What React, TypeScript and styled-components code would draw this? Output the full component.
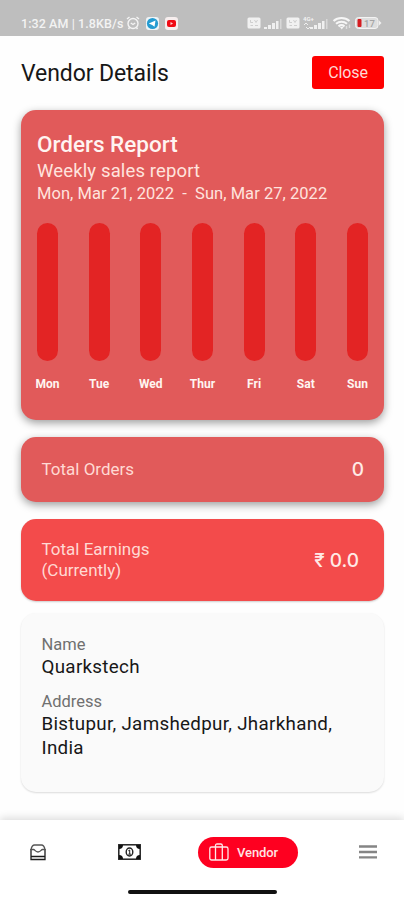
import styled, { createGlobalStyle } from "styled-components";

const days = ["Mon", "Tue", "Wed", "Thur", "Fri", "Sat", "Sun"];

const SimIcon = () => (
	<svg width="14" height="12" viewBox="0 0 14 12">
		<rect x="0.5" y="0.5" width="13" height="11" rx="1.500" fill="#f1f1f1" />
		<path d="M3.500 3v2.500H6M7.500 3l1.500 2.500L10.500 3M3.500 8.500H6M8 8.500h3" stroke="#cfcfcf" fill="none" />
	</svg>
);

const Signal = ({ lte }: { lte?: boolean }) => (
	<svg width={lte ? 25 : 18} height="14" viewBox={lte ? "-7 0 25 14" : "0 0 18 14"}>
		{lte && (
			<>
				<text x="-7" y="5" fontFamily="Roboto, sans-serif" fontSize="6" fontWeight="700" fill="#f2f2f2">
					4G+
				</text>
				<path d="M-6 9l2-2 2 2M-4 11l2 2 2-2" stroke="#efefef" fill="none" />
			</>
		)}
		<path d="M0 11h3v2H0zM4 9h3v4H4zM8 7h3v6H8zM12 5h2.500v8H12z" fill="#f0f0f0" />
		<path d="M16 3h1.500v10H16z" fill="#d8d8d8" />
	</svg>
);

const App = () => {
	return (
		<Screen>
			<Global />
			<StatusBar>
				<Clock>1:32 AM | 1.8KB/s</Clock>
				<StatusLeft>
					<svg width="14" height="14" viewBox="0 0 14 14" fill="none" stroke="#f4f4f4" strokeWidth="1.4">
						<circle cx="7" cy="7.500" r="5" />
						<path d="M1 3l2.500-2M13 3l-2.500-2M4.800 7L7 8.500 9.200 7M3.500 11.500l-1 1.500M10.500 11.500l1 1.500" />
					</svg>
					<svg width="13" height="13" viewBox="0 0 13 13">
						<rect width="13" height="13" rx="3" fill="#eef4f7" />
						<circle cx="6.500" cy="6.500" r="5.600" fill="#249bd1" />
						<path d="M2.800 6.500l6.700-3-1 6.300-2.300-1.800z" fill="#fff" />
					</svg>
					<svg width="13" height="13" viewBox="0 0 13 13">
						<rect width="13" height="13" rx="3" fill="#f7eeee" />
						<rect x="2" y="3" width="9" height="7" rx="2" fill="#f00a14" />
						<path d="M5.500 5l2.500 1.500L5.500 8z" fill="#ffd0d0" />
					</svg>
				</StatusLeft>
				<StatusRight>
					<SimIcon />
					<Signal />
					<SimIcon />
					<Signal lte />
					<svg width="20" height="14" viewBox="0 0 20 14" fill="none" stroke="#f6f6f6" strokeWidth="2.100">
						<path d="M1.500 5c4.500-4 11.500-4 16 0M4 7.800c3.200-2.700 7.800-2.700 11 0M6.500 10.300c1.800-1.400 4.200-1.400 6 0" />
						<path d="M8 11h3.500l-1.700 2.500z" fill="#f6f6f6" stroke="none" />
						<path d="M14.500 13v-3M17.500 8.500v3.500" stroke="#dedede" strokeWidth="1.400" />
					</svg>
					<svg width="27" height="12" viewBox="0 0 27 12">
						<rect x="0.500" y="0.500" width="22.500" height="11" rx="3" fill="#dedede" stroke="#f3f3f3" />
						<path d="M24 3.500l2.500 2.500L24 8.500z" fill="#f0f0f0" />
						<rect x="2.500" y="2" width="4" height="8" rx="1" fill="#d51c20" />
						<text x="9" y="9.500" fontFamily="Roboto, sans-serif" fontSize="9.500" fontWeight="500" fill="#a5a5a5">
							17
						</text>
					</svg>
				</StatusRight>
			</StatusBar>

			<Header>
				<Title>Vendor Details</Title>
				<CloseButton>Close</CloseButton>
			</Header>

			<Content>
				<ReportCard>
					<ReportTitle>Orders Report</ReportTitle>
					<ReportSub>Weekly sales report</ReportSub>
					<ReportDates>Mon, Mar 21, 2022&nbsp; -&nbsp; Sun, Mar 27, 2022</ReportDates>
					<Chart>
						{days.map((day) => (
							<Day key={day}>
								<Bar />
								<DayName>{day}</DayName>
							</Day>
						))}
					</Chart>
				</ReportCard>

				<OrdersCard>
					<StatLabel>Total Orders</StatLabel>
					<StatValue>0</StatValue>
				</OrdersCard>

				<EarningsCard>
					<StatLabel>
						Total Earnings
						<br />
						(Currently)
					</StatLabel>
					<StatValue>₹ 0.0</StatValue>
				</EarningsCard>

				<InfoCard>
					<InfoLabel>Name</InfoLabel>
					<InfoValue>Quarkstech</InfoValue>
					<InfoLabel>Address</InfoLabel>
					<InfoValue>
						Bistupur, Jamshedpur, Jharkhand,
						<br />
						India
					</InfoValue>
				</InfoCard>
			</Content>

			<BottomNav>
				<Tabs>
					<NavItem $gap={71}>
						<svg width="18" height="18" viewBox="0 0 18 18" fill="none" stroke="#1c1c1c" strokeWidth="1.300">
							<path d="M2 6.500Q3 2 5.500 2h7Q15 2 16 6.500" stroke="#555" />
							<path d="M2 6v10.500h14V6M2 13.500h14" />
							<path d="M2 6.500h2.500c1.500 0 1.500 2.500 4.500 2.500s3-2.500 4.500-2.500H16" stroke="#555" />
						</svg>
					</NavItem>
					<NavItem $gap={57}>
						<svg width="23" height="16" viewBox="0 0 23 16">
							<rect x="0.800" y="0.800" width="21.400" height="14.400" fill="#fff" stroke="#222" strokeWidth="1.500" />
							<path d="M1 1h4A4 4 0 0 1 1 5zM22 1h-4a4 4 0 0 0 4 4zM1 15h4A4 4 0 0 0 1 11zM22 15h-4a4 4 0 0 1 4-4z" fill="#111" />
							<ellipse cx="11.500" cy="8" rx="3.300" ry="4" fill="none" stroke="#222" strokeWidth="1.400" />
							<path d="M10.300 6.800l1.400-.8v4M10.300 10.200h2.700" stroke="#222" fill="none" />
						</svg>
					</NavItem>
					<VendorTab>
						<svg width="20" height="18" viewBox="0 0 20 18" fill="none" stroke="#ffe9ea" strokeWidth="1.300">
							<rect x="0.800" y="4" width="18.200" height="13" rx="1.800" />
							<path d="M6.500 17V2.600Q6.500 1 8.100 1h3.600q1.600 0 1.600 1.600V17" />
						</svg>
						<span>Vendor</span>
					</VendorTab>
					<NavItem>
						<svg width="18" height="14" viewBox="0 0 18 14" fill="#858585">
							<path d="M0 .3h18v2.400H0zM0 5.800h18v2.400H0zM0 11.200h18v2.400H0z" />
						</svg>
					</NavItem>
				</Tabs>
				<HomeIndicator />
			</BottomNav>
		</Screen>
	);
};

export default App;

const Global = createGlobalStyle`
	* {
		box-sizing: border-box;
	}
	body {
		margin: 0;
		background-color: #fefefe;
		font-family: Roboto, "Noto Sans", sans-serif;
	}
	svg {
		display: block;
		flex-shrink: 0;
	}
`;
const Screen = styled.div`
	width: 404px;
	height: 900px;
	display: flex;
	flex-direction: column;
	overflow: hidden;
	background-color: #fefefe;
`;
const StatusBar = styled.div`
	height: 36px;
	flex-shrink: 0;
	display: flex;
	align-items: center;
	padding: 10px 22px 0 21px;
	background-color: #bebebe;
`;
const Clock = styled.span`
	width: 105px;
	font-size: 12.5px;
	font-weight: 500;
	letter-spacing: 0.08px;
	white-space: nowrap;
	color: #f3f3f3;
`;
const StatusLeft = styled.div`
	display: flex;
	align-items: center;
	gap: 6px;
`;
const StatusRight = styled.div`
	margin-left: auto;
	display: flex;
	align-items: center;
	gap: 3.4px;
`;
const Header = styled.div`
	height: 74px;
	flex-shrink: 0;
	display: flex;
	align-items: center;
	justify-content: space-between;
	padding: 0 20px 0 21px;
`;
const Title = styled.h1`
	margin: 0;
	font-size: 23px;
	font-weight: 400;
	letter-spacing: -0.09px;
	color: #171717;
`;
const CloseButton = styled.button`
	width: 72px;
	height: 33px;
	margin-bottom: 1px;
	padding: 0 0 1px;
	border: none;
	border-radius: 3px;
	background-color: #fe0000;
	color: #ffd9d6;
	font-family: inherit;
	font-size: 16px;
	letter-spacing: -0.1px;
`;
const Content = styled.div`
	flex: 1;
	padding: 0 20px 0 21px;
`;
const Card = styled.div`
	border-radius: 15px;
	background-color: #e15a5a;
	box-shadow: 0 3px 8px rgba(0, 0, 0, 0.38);
`;
const ReportCard = styled(Card)`
	height: 310px;
	padding: 21px 16px 0;
	color: #ffe3de;
	white-space: nowrap;
`;
const ReportTitle = styled.div`
	margin-bottom: 1px;
	font-size: 22.5px;
	font-weight: 500;
	line-height: 27px;
	color: #fff4f1;
`;
const ReportSub = styled.div`
	font-size: 18.5px;
	line-height: 24px;
	letter-spacing: 0.14px;
`;
const ReportDates = styled.div`
	font-size: 16.5px;
	line-height: 21px;
	letter-spacing: 0.04px;
`;
const Chart = styled.div`
	display: flex;
	justify-content: space-between;
	margin-top: 19px;
`;
const Day = styled.div`
	width: 21px;
	display: flex;
	flex-direction: column;
	align-items: center;
`;
const Bar = styled.div`
	width: 21px;
	height: 138px;
	border-radius: 11px;
	background-color: #e32424;
`;
const DayName = styled.span`
	margin-top: 15px;
	font-size: 12px;
	font-weight: 700;
	line-height: 16px;
	color: #fff5f1;
`;
const OrdersCard = styled(Card)`
	height: 65px;
	margin-top: 17px;
	padding: 0 20px 0 20.5px;
	display: flex;
	align-items: center;
	justify-content: space-between;
`;
const EarningsCard = styled(OrdersCard)`
	height: 82px;
	padding-right: 25px;
	background-color: #f34b4b;
	box-shadow: 0 1px 2px rgba(0, 0, 0, 0.2);
`;
const StatLabel = styled.span`
	font-size: 17px;
	line-height: 21px;
	color: #ffd9d3;
`;
const StatValue = styled.span`
	font-family: Inter, Roboto, sans-serif;
	font-size: 19px;
	font-weight: 500;
	color: #ffeae6;
`;
const InfoCard = styled(Card)`
	height: 179px;
	margin-top: 12px;
	padding: 21px 20px 0 20.5px;
	background-color: #fafafa;
	box-shadow: 0 1px 2px rgba(0, 0, 0, 0.14);
`;
const InfoLabel = styled.div`
	font-size: 16.5px;
	line-height: 21px;
	color: #707070;
`;
const InfoValue = styled.div`
	margin-bottom: 12px;
	font-size: 18.8px;
	line-height: 24px;
	letter-spacing: 0.3px;
	color: #171717;
`;
const BottomNav = styled.div`
	height: 80px;
	flex-shrink: 0;
	background-color: #fff;
	box-shadow: 0 -2px 8px rgba(0, 0, 0, 0.14);
`;
const Tabs = styled.div`
	display: flex;
	align-items: center;
	height: 64px;
	padding-left: 29px;
`;
const NavItem = styled.div<{ $gap?: number }>`
	margin-right: ${(p) => p.$gap ?? 0}px;
`;
const VendorTab = styled.div`
	width: 100px;
	height: 31px;
	display: flex;
	align-items: center;
	gap: 8px;
	margin-right: 61px;
	padding-left: 11px;
	border-radius: 16px;
	background-color: #fe0020;
	color: #ffe3e4;
	font-size: 13px;
	font-weight: 500;
	letter-spacing: -0.1px;
`;
const HomeIndicator = styled.div`
	width: 149px;
	height: 4px;
	margin: 6px auto 0;
	border-radius: 2px;
	background-color: #111;
`;
